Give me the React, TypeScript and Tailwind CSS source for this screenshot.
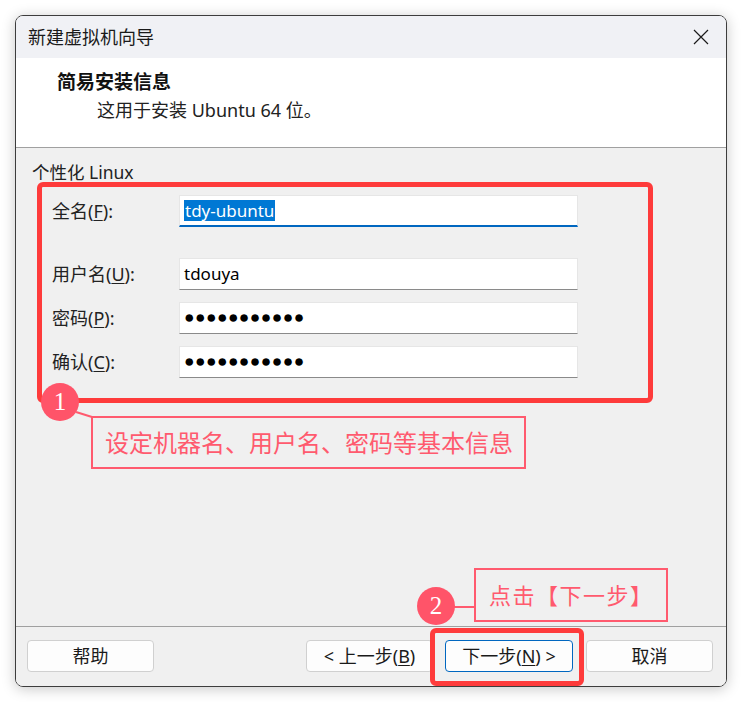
import React from "react";

const ui = "font-['Noto_Sans','Noto_Sans_CJK_SC',sans-serif]";

function Underlined({ pre, k, post }: { pre: string; k: string; post: string }) {
  return (
    <span>
      {pre}(<span className="underline underline-offset-2">{k}</span>){post}
    </span>
  );
}

function Field({ label, children, focused }: { label: React.ReactNode; children: React.ReactNode; focused?: boolean }) {
  return (
    <div className="flex items-center h-[32px]">
      <div className="w-[127px] text-[18px] text-[#222]">{label}</div>
      <div
        className={`w-[399px] h-[32px] bg-white border border-[#e6e6e6] flex items-center pl-[4px] ${
          focused ? "border-b-2 border-b-[#0067c0]" : "border-b-[#8a8a8a]"
        }`}
      >
        {children}
      </div>
    </div>
  );
}

function Dots() {
  return (
    <span className="font-['Liberation_Sans',sans-serif] text-[17.5px] tracking-[0.4px] text-black leading-none">
      ●●●●●●●●●●●
    </span>
  );
}

function Btn({ children, primary, w = "w-[127px]" }: { children: React.ReactNode; primary?: boolean; w?: string }) {
  return (
    <div
      className={`${w} h-[32px] rounded-[4px] bg-[#fdfdfd] flex items-center justify-center text-[18px] text-[#1a1a1a] border ${
        primary ? "border-[#0067c0]" : "border-[#d0d0d0]"
      }`}
    >
      {children}
    </div>
  );
}

export default function App() {
  return (
    <div className={`relative w-[742px] h-[702px] bg-white p-[15px] ${ui}`}>
      <div className="w-[712px] h-[672px] rounded-[8px] overflow-hidden border border-[#3d3d3d] shadow-[0_2px_14px_rgba(0,0,0,0.22)] flex flex-col">
        {/* title bar */}
        <div className="h-[42px] bg-[#f0f1f5] flex items-center justify-between pl-[12px] pr-[17px]">
          <span className="text-[18px] text-[#1a1a1a]">新建虚拟机向导</span>
          <svg width="16" height="16" viewBox="0 0 16 16">
            <path d="M1 1L15 15M15 1L1 15" stroke="#1a1a1a" strokeWidth="1.2" />
          </svg>
        </div>
        {/* header */}
        <div className="h-[90px] bg-white border-b border-[#a0a0a0] flex flex-col pt-[12px]">
          <div className="pl-[41px] text-[19px] font-bold leading-[25px] text-[#111]">简易安装信息</div>
          <div className="pl-[81px] text-[18px] leading-[25px] mt-[3px] text-[#222]">这用于安装 Ubuntu 64 位。</div>
        </div>
        {/* body */}
        <div className="h-[479px] bg-[#f0f0f0] border-b border-[#a0a0a0] pl-[16px] pt-[12px]">
          <div className="text-[17.5px] leading-[24px] text-[#222]">个性化 Linux</div>
          <div className="pl-[20px] mt-[11px] flex flex-col">
            <Field label={<Underlined pre="全名" k="F" post=":" />} focused>
              <span className="bg-[#0078d4] text-white text-[17px] leading-[21px] px-[1px]">tdy-ubuntu</span>
            </Field>
            <div className="h-[31px]" />
            <Field label={<Underlined pre="用户名" k="U" post=":" />}>
              <span className="text-[17px] text-black">tdouya</span>
            </Field>
            <div className="h-[12px]" />
            <Field label={<Underlined pre="密码" k="P" post=":" />}>
              <Dots />
            </Field>
            <div className="h-[12px]" />
            <Field label={<Underlined pre="确认" k="C" post=":" />}>
              <Dots />
            </Field>
          </div>
        </div>
        {/* footer */}
        <div className="flex-1 bg-[#f0f0f0] flex items-start pt-[13px] pl-[11px] pr-[13px]">
          <Btn>帮助</Btn>
          <div className="flex-1" />
          <Btn>
            <span>&lt; 上一步(<span className="underline underline-offset-2">B</span>)</span>
          </Btn>
          <div className="w-[12px]" />
          <Btn primary w="w-[128px]">
            <span>下一步(<span className="underline underline-offset-2">N</span>) &gt;</span>
          </Btn>
          <div className="w-[13px]" />
          <Btn>取消</Btn>
        </div>
      </div>

      {/* annotations */}
      <div className="absolute left-[37px] top-[182px] w-[616px] h-[221px] border-[5px] border-[#fe3b3b] rounded-[6px]" />
      <div className="absolute left-[430px] top-[628px] w-[154px] h-[58px] border-[5px] border-[#fe3b3b] rounded-[6px]" />

      <svg className="absolute left-0 top-0" width="742" height="702">
        <line x1="76" y1="412" x2="92" y2="417" stroke="#ff5a6e" strokeWidth="2" />
        <line x1="454" y1="607" x2="475" y2="607" stroke="#ff5a6e" strokeWidth="2" />
      </svg>

      <div className="absolute left-[41px] top-[383px] w-[38px] h-[38px] rounded-full bg-[#ff5469] text-white flex items-center justify-center font-['Liberation_Serif',serif] text-[25px]">
        1
      </div>
      <div className="absolute left-[417px] top-[587px] w-[38px] h-[38px] rounded-full bg-[#ff5469] text-white flex items-center justify-center font-['Liberation_Serif',serif] text-[25px]">
        2
      </div>

      <div className="absolute left-[91px] top-[416px] w-[435px] h-[53px] border-2 border-[#ff5a6e] flex items-center pl-[12px] text-[24px] text-[#ff5a6e]">
        设定机器名、用户名、密码等基本信息
      </div>
      <div className="absolute left-[474px] top-[568px] w-[194px] h-[54px] border-2 border-[#ff5a6e] flex items-center pl-[13px] text-[22px] tracking-[1.5px] text-[#ff5a6e]">
        点击【下一步】
      </div>
    </div>
  );
}
